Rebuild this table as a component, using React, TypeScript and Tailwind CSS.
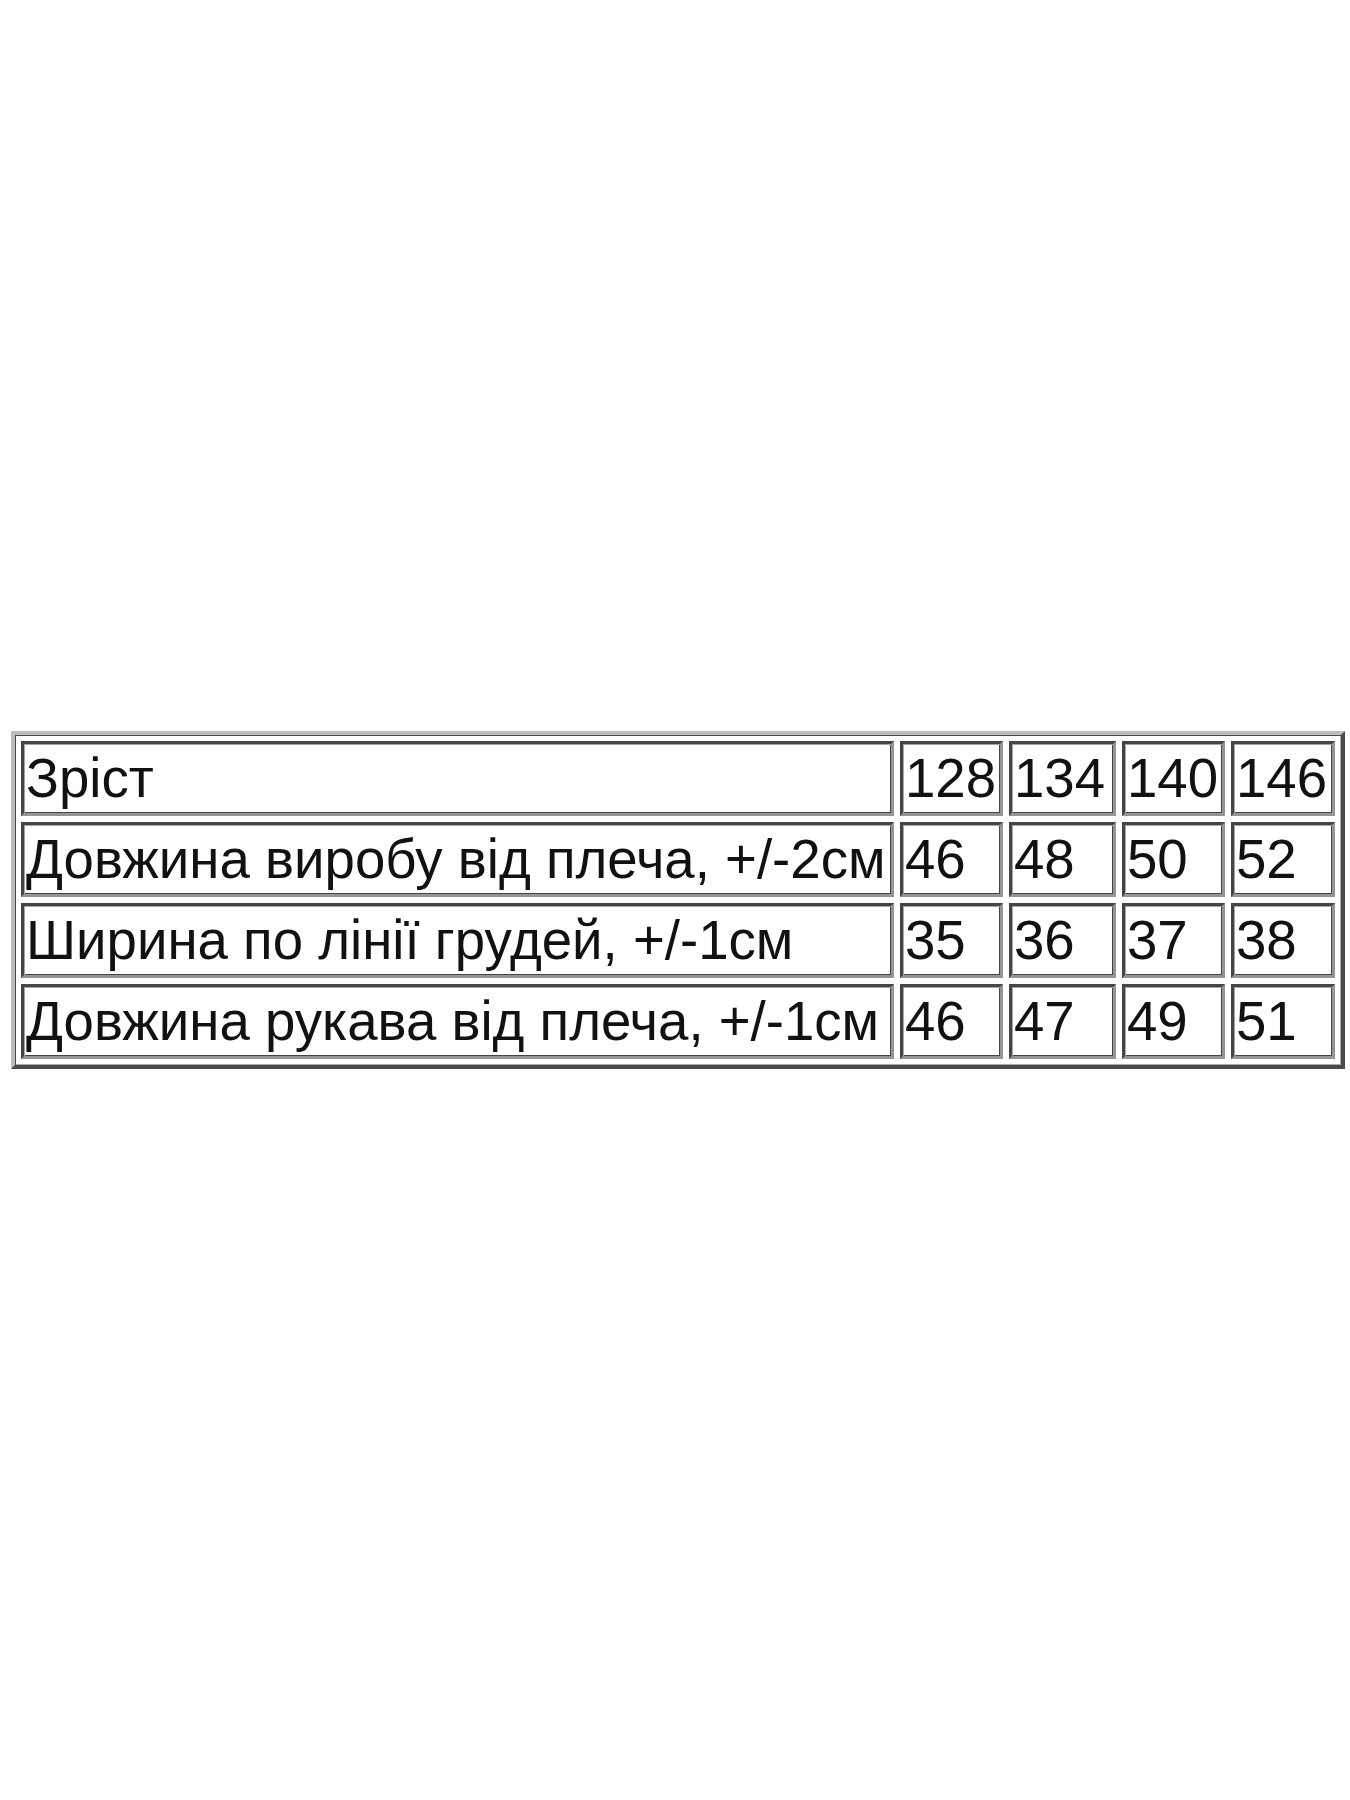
const rows: string[][] = [
  ["Зріст", "128", "134", "140", "146"],
  ["Довжина виробу від плеча, +/-2см", "46", "48", "50", "52"],
  ["Ширина по лінії грудей, +/-1см", "35", "36", "37", "38"],
  ["Довжина рукава від плеча, +/-1см", "46", "47", "49", "51"],
];

const widths = ["w-[873px]", "w-[103px]", "w-[107px]", "w-[103px]", "w-[104px]"];

export default function App() {
  return (
    <div className="flex h-[1800px] w-[1350px] items-center justify-center bg-white pl-[6px] font-['Liberation_Sans',Arial,sans-serif] text-[#111]">
      <table className="w-[1334px] table-fixed border-separate border-spacing-[6px] border-[4px] border-t-[#bcbcbc] border-l-[#bcbcbc] border-r-[#4a4a4a] border-b-[#4a4a4a] shadow-[inset_1px_1px_0_#4a4a4a,inset_-1px_-1px_0_#aaaaaa]">
        <tbody>
          {rows.map((row, i) => (
            <tr key={i}>
              {row.map((cell, j) => (
                <td
                  key={j}
                  className={`${widths[j]} h-[75px] whitespace-nowrap border-[3px] border-t-[#454545] border-l-[#454545] border-r-[#959595] border-b-[#959595] pl-[2px] pr-[3px] py-0 align-middle text-[54.6px] leading-[63px] shadow-[inset_1px_1px_0_#a5a5a5,inset_-1px_-1px_0_#454545]`}
                >
                  {cell}
                </td>
              ))}
            </tr>
          ))}
        </tbody>
      </table>
    </div>
  );
}
